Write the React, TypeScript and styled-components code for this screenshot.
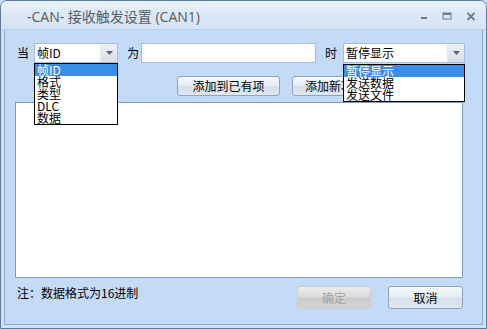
import React from "react";
import styled, {createGlobalStyle} from "styled-components";

const GlobalStyle = createGlobalStyle`
	html, body {
		margin: 0;
		padding: 0;
		background: #c8dcf4;
	}
	body {
		font-family: "Noto Sans CJK SC", "Liberation Sans", sans-serif;
		font-size: 12px;
		color: #000;
	}
`;

const fieldOptions = ["帧ID", "格式", "类型", "DLC", "数据"];
const actionOptions = ["暂停显示", "发送数据", "发送文件"];

const App = () => {
	return (
		<>
			<GlobalStyle />
			<Window>
				<TitleBar>
					<Title>-CAN- 接收触发设置 (CAN1)</Title>
					<Controls>
						<svg width="8" height="8" viewBox="0 0 8 8">
							<rect x="1" y="5" width="6" height="2" fill="#6d7d91" />
						</svg>
						<svg width="10" height="8" viewBox="0 0 10 8">
							<rect x="1" y="1" width="8" height="6" fill="none" stroke="#6d7d91" strokeWidth="1" />
							<rect x="1" y="1" width="8" height="2" fill="#6d7d91" />
						</svg>
						<svg width="10" height="9" viewBox="0 0 10 9">
							<path d="M1.5 1 L8.5 8 M8.5 1 L1.5 8" stroke="#6d7d91" strokeWidth="1.8" />
						</svg>
					</Controls>
				</TitleBar>
				<Body>
					<ConditionRow>
						<Label $ml={2} $mr={5}>当</Label>
						<Combo $width={84}>
							<ComboText>帧ID</ComboText>
							<ComboArrow>
								<svg width="7" height="4" viewBox="0 0 7 4">
									<path d="M0 0 H7 L3.5 4 Z" fill="#5b6676" />
								</svg>
							</ComboArrow>
							<DropList>
								{fieldOptions.map((o, i) => (
									<DropItem key={o} $active={i === 0}>{o}</DropItem>
								))}
							</DropList>
						</Combo>
						<Label $ml={9} $mr={2}>为</Label>
						<TextInput />
						<Label $ml={9} $mr={6}>时</Label>
						<Combo $width={122}>
							<ComboText>暂停显示</ComboText>
							<ComboArrow>
								<svg width="7" height="4" viewBox="0 0 7 4">
									<path d="M0 0 H7 L3.5 4 Z" fill="#5b6676" />
								</svg>
							</ComboArrow>
							<DropList $offset={1}>
								{actionOptions.map((o, i) => (
									<DropItem key={o} $active={i === 0}>{o}</DropItem>
								))}
							</DropList>
						</Combo>
					</ConditionRow>
					<ButtonRow>
						<Button $width={103}>添加到已有项</Button>
						<Button $width={74}>添加新项</Button>
					</ButtonRow>
					<ListBox />
					<Footer>
						<Note>注：数据格式为16进制</Note>
						<FooterButtons>
							<Button $width={74} $height={23} disabled>确定</Button>
							<Button $width={75} $height={23}>取消</Button>
						</FooterButtons>
					</Footer>
				</Body>
			</Window>
		</>
	);
};

export default App;

const Window = styled.div`
	box-sizing: border-box;
	width: 487px;
	height: 329px;
	display: flex;
	flex-direction: column;
	border: 1px solid #5f7a9f;
	border-radius: 7px 7px 0 0;
	background: #d0e1f5;
	overflow: hidden;
`;

const TitleBar = styled.div`
	height: 28px;
	flex: none;
	display: flex;
	align-items: center;
	padding: 0 10px 0 26px;
	background: linear-gradient(#e8f0fa, #dbe7f5 60%, #d5e3f4);
	border-bottom: 1px solid #b9cde6;
`;

const Title = styled.div`
	flex: 1;
	font-family: "Open Sans", "Noto Sans CJK SC", sans-serif;
	font-size: 14px;
	color: #555d66;
	padding-top: 2px;
`;

const Controls = styled.div`
	display: flex;
	align-items: center;
	gap: 14px;
	padding-top: 2px;

	svg {
		display: block;
	}
`;

const Body = styled.div`
	flex: 1;
	margin: 0 3px 3px;
	border: 1px solid #8fabd0;
	border-top: none;
	background: #c3dbf7;
	padding: 13px 0 0 10px;
	display: flex;
	flex-direction: column;
`;

const ConditionRow = styled.div`
	display: flex;
	align-items: center;
	height: 20px;
`;

type LabelProps = {$ml: number; $mr: number};

const Label = styled.span<LabelProps>`
	font-size: 12px;
	line-height: 12px;
	margin: 0 ${p => p.$mr}px 0 ${p => p.$ml}px;
`;

const Combo = styled.div<{$width: number}>`
	position: relative;
	box-sizing: border-box;
	width: ${p => p.$width}px;
	height: 20px;
	border: 1px solid #a7bcd6;
	background: #fff;
	display: flex;
	align-items: center;
`;

const ComboText = styled.span`
	flex: 1;
	padding-left: 2px;
	font-size: 12px;
	line-height: 12px;
`;

const ComboArrow = styled.div`
	width: 16px;
	align-self: stretch;
	display: flex;
	align-items: center;
	justify-content: center;
	background: linear-gradient(#eef1f5, #d9dee6);
	border-left: 1px solid #e3e7ee;
`;

const DropList = styled.div<{$offset?: number}>`
	position: absolute;
	left: -1px;
	right: -1px;
	top: ${p => 19 + (p.$offset || 0)}px;
	border: 1px solid #000;
	background: #fff;
	z-index: 2;
`;

const DropItem = styled.div<{$active: boolean}>`
	height: 12px;
	line-height: 12px;
	font-size: 12px;
	padding-left: 2px;
	white-space: nowrap;
	background: ${p => (p.$active ? "#3a8ee6" : "#fff")};
	color: ${p => (p.$active ? "#fff" : "#000")};
`;

const TextInput = styled.div`
	box-sizing: border-box;
	width: 175px;
	height: 20px;
	border: 1px solid #a7bcd6;
	background: #fff;
`;

const ButtonRow = styled.div`
	display: flex;
	gap: 12px;
	margin: 13px 0 0 162px;
`;

type ButtonProps = {$width: number; $height?: number};

const Button = styled.button<ButtonProps>`
	box-sizing: border-box;
	width: ${p => p.$width}px;
	height: ${p => p.$height || 20}px;
	padding: 0;
	border: 1px solid #8ea3bd;
	border-radius: 3px;
	background: linear-gradient(#f6f9fc, #e6edf5 48%, #d6e0eb 52%, #dfe7f0);
	font-family: "Noto Sans CJK SC", sans-serif;
	font-size: 12px;
	line-height: 12px;
	color: #000;
	white-space: nowrap;
	overflow: hidden;

	&:disabled {
		border-color: #c9ccd0;
		background: linear-gradient(#ececec, #dadada 48%, #cbcbcb 52%, #d3d3d3);
		color: #a3a3a3;
	}
`;

const ListBox = styled.div`
	box-sizing: border-box;
	width: 448px;
	height: 176px;
	margin-top: 6px;
	border: 1px solid #7f9cc0;
	background: #fff;
`;

const Footer = styled.div`
	width: 448px;
	margin-top: 8px;
	display: flex;
	justify-content: space-between;
	align-items: flex-start;
`;

const Note = styled.span`
	margin: 1px 0 0 2px;
	font-size: 12px;
	line-height: 12px;
`;

const FooterButtons = styled.div`
	display: flex;
	gap: 17px;
`;
